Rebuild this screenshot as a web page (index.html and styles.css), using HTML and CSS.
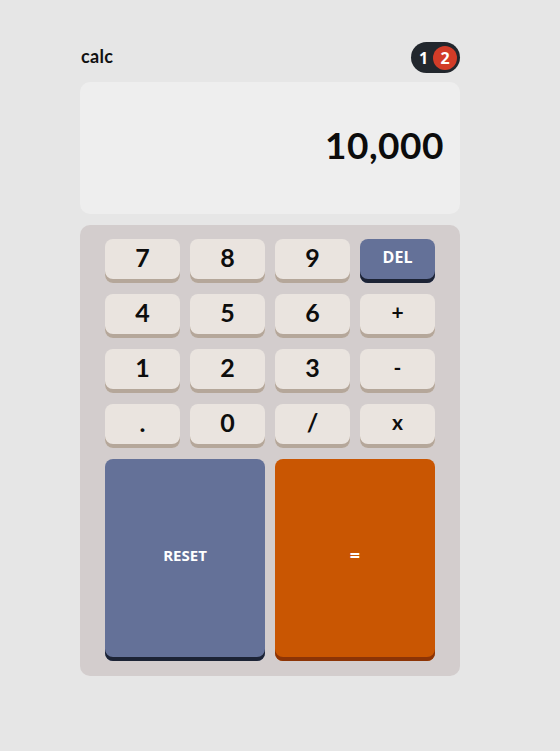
FILE: index.html
```html
<!DOCTYPE html>
<html lang="en">
<head>
<meta charset="utf-8">
<title>calc</title>
<link rel="stylesheet" href="styles.css">
</head>
<body>
<main class="calc">
  <header class="top">
    <h1 class="brand">calc</h1>
    <div class="toggle">
      <span class="opt">1</span>
      <span class="knob">2</span>
    </div>
  </header>
  <section class="screen">
    <output class="value">10,000</output>
  </section>
  <section class="pad">
    <div class="keys">
      <button class="key">7</button>
      <button class="key">8</button>
      <button class="key">9</button>
      <button class="key key-blue key-word">DEL</button>
      <button class="key">4</button>
      <button class="key">5</button>
      <button class="key">6</button>
      <button class="key key-op">+</button>
      <button class="key">1</button>
      <button class="key">2</button>
      <button class="key">3</button>
      <button class="key key-op">-</button>
      <button class="key">.</button>
      <button class="key">0</button>
      <button class="key">/</button>
      <button class="key key-op">x</button>
    </div>
    <div class="big">
      <button class="key key-blue key-word key-large">RESET</button>
      <button class="key key-orange key-word key-large key-eq">=</button>
    </div>
  </section>
</main>
</body>
</html>
```
FILE: styles.css
```css
* { box-sizing: border-box; }
html, body {
  margin: 0;
  padding: 0;
  background: #e6e6e6;
}
body {
  padding-top: 42px;
  font-family: "Lato", "DejaVu Sans", sans-serif;
  color: #111;
}
.calc {
  width: 380px;
  margin-left: 80px;
  display: flex;
  flex-direction: column;
}
.top {
  height: 31px;
  display: flex;
  align-items: center;
  justify-content: space-between;
  margin-bottom: 9px;
}
.brand {
  margin: 0 0 3px 1px;
  font-size: 18px;
  font-weight: 700;
  letter-spacing: 0.3px;
  color: #111;
}
.toggle {
  width: 49px;
  height: 31px;
  border-radius: 16px;
  background: #22272d;
  display: flex;
  align-items: center;
  justify-content: space-between;
  padding: 0 3px 0 8px;
}
.opt {
  color: #fff;
  font-family: "Open Sans", sans-serif;
  font-weight: 700;
  font-size: 16px;
}
.knob {
  width: 24px;
  height: 24px;
  border-radius: 50%;
  background: #d23c28;
  color: #fff;
  font-family: "Open Sans", sans-serif;
  font-weight: 700;
  font-size: 16px;
  display: flex;
  align-items: center;
  justify-content: center;
}
.screen {
  height: 132px;
  background: #eeeeee;
  border-radius: 10px;
  display: flex;
  align-items: center;
  justify-content: flex-end;
  padding: 0 16px 8px 0;
  margin-bottom: 11px;
}
.value {
  font-size: 37px;
  font-weight: 700;
  color: #0c0c0c;
  letter-spacing: 0.5px;
}
.pad {
  background: #d3cdcd;
  border-radius: 10px;
  padding: 14px 25px 15px;
  display: flex;
  flex-direction: column;
  gap: 11px;
}
.keys {
  display: grid;
  grid-template-columns: repeat(4, 75px);
  grid-auto-rows: 44px;
  column-gap: 10px;
  row-gap: 11px;
}
.big {
  display: grid;
  grid-template-columns: 160px 160px;
  column-gap: 10px;
}
.key {
  border: 0;
  margin: 0;
  border-radius: 8px;
  background: #eae4df;
  box-shadow: inset 0 -4px 0 #b5a79a;
  font-family: "Lato", "DejaVu Sans", sans-serif;
  font-weight: 700;
  font-size: 25px;
  color: #0d0d0d;
  padding: 0 0 9px;
  display: flex;
  align-items: center;
  justify-content: center;
}
.key-op {
  font-size: 21px;
}
.key-word {
  font-family: "Open Sans", sans-serif;
  font-size: 16px;
  color: #fff;
}
.key-blue {
  background: #647198;
  box-shadow: inset 0 -4px 0 #1c2335;
}
.key-orange {
  background: #c95602;
  box-shadow: inset 0 -4px 0 #8c3406;
}
.key-large {
  height: 202px;
  font-size: 15px;
  padding-bottom: 10px;
}
.key-eq {
  font-size: 18px;
}
```
